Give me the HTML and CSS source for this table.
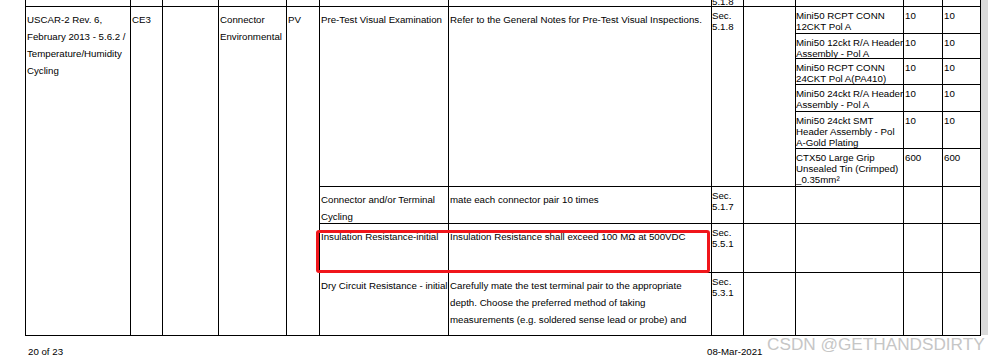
FILE: index.html
```html
<!DOCTYPE html>
<html>
<head>
<meta charset="utf-8">
<link rel="stylesheet" href="styles.css">
</head>
<body>
<div class="page">
  <div class="sheet">
    <div class="grid">
      <!-- tail of the previous row -->
      <div class="cell"></div><div class="cell"></div><div class="cell"></div><div class="cell"></div>
      <div class="cell"></div><div class="cell"></div><div class="cell"></div>
      <div class="cell sec"><div class="cut"><span>5.1.8</span></div></div>
      <div class="cell"></div><div class="cell"></div><div class="cell"></div><div class="cell"></div>

      <!-- main row -->
      <div class="cell txt span9">USCAR-2 Rev. 6,<br>February 2013 - 5.6.2 /<br>Temperature/Humidity<br>Cycling</div>
      <div class="cell txt span9">CE3</div>
      <div class="cell span9"></div>
      <div class="cell txt span9">Connector<br>Environmental</div>
      <div class="cell txt span9">PV</div>
      <div class="cell txt span6">Pre-Test Visual Examination</div>
      <div class="cell txt span6">Refer to the General Notes for Pre-Test Visual Inspections.</div>
      <div class="cell sec span6">Sec.<br>5.1.8</div>
      <div class="cell span6"></div>

      <div class="cell sub">Mini50 RCPT CONN<br>12CKT Pol A</div><div class="cell sub num">10</div><div class="cell sub num">10</div>
      <div class="cell sub">Mini50 12ckt R/A Header<br>Assembly - Pol A</div><div class="cell sub num">10</div><div class="cell sub num">10</div>
      <div class="cell sub">Mini50 RCPT CONN<br>24CKT Pol A(PA410)</div><div class="cell sub num">10</div><div class="cell sub num">10</div>
      <div class="cell sub">Mini50 24ckt R/A Header<br>Assembly - Pol A</div><div class="cell sub num">10</div><div class="cell sub num">10</div>
      <div class="cell sub">Mini50 24ckt SMT<br>Header Assembly - Pol<br>A-Gold Plating</div><div class="cell sub num">10</div><div class="cell sub num">10</div>
      <div class="cell sub">CTX50 Large Grip<br>Unsealed Tin (Crimped)<br>_0.35mm²</div><div class="cell sub num">600</div><div class="cell sub num">600</div>

      <!-- connector cycling -->
      <div class="cell txt">Connector and/or Terminal<br>Cycling</div>
      <div class="cell txt">mate each connector pair 10 times</div>
      <div class="cell sec">Sec.<br>5.1.7</div>
      <div class="cell"></div><div class="cell"></div><div class="cell"></div><div class="cell"></div>

      <!-- insulation -->
      <div class="cell txt">Insulation Resistance-initial</div>
      <div class="cell txt">Insulation Resistance shall exceed 100 MΩ at 500VDC</div>
      <div class="cell sec">Sec.<br>5.5.1</div>
      <div class="cell"></div><div class="cell"></div><div class="cell"></div><div class="cell"></div>

      <!-- dry circuit -->
      <div class="cell txt">Dry Circuit Resistance - initial</div>
      <div class="cell txt">Carefully mate the test terminal pair to the appropriate<br>depth. Choose the preferred method of taking<br>measurements (e.g. soldered sense lead or probe) and</div>
      <div class="cell sec">Sec.<br>5.3.1</div>
      <div class="cell"></div><div class="cell"></div><div class="cell"></div><div class="cell"></div>
    </div>
    <div class="highlight"></div>
    <div class="footer">
      <span class="pageno">20 of 23</span>
      <span class="date">08-Mar-2021</span>
      <span class="watermark">CSDN @GETHANDSDIRTY</span>
    </div>
  </div>
  <div class="edge"></div>
</div>
</body>
</html>
```
FILE: styles.css
```css
html, body {
  margin: 0;
  padding: 0;
  background: #fff;
}
body {
  width: 988px;
  height: 362px;
  overflow: hidden;
  font-family: "Liberation Sans", Arial, sans-serif;
  font-size: 9.7px;
  color: #000;
}
.page {
  display: flex;
  align-items: flex-start;
}
.sheet {
  position: relative;
  width: 981px;
  flex: none;
}
.edge {
  width: 7px;
  height: 335px;
  background: #dadada;
  flex: none;
}
.grid {
  margin-left: 25px;
  width: 956px;
  box-sizing: border-box;
  display: grid;
  grid-template-columns: 104px 31px 55px 67px 32px 128px 262px 31px 51px 107px 38px 37px;
  grid-template-rows: 6px 26px 24px 25px 26px 36px 37px 36px 48px 62px;
  gap: 1px;
  padding: 0 1px 1px 1px;
  background: #000;
}
.cell {
  background: #fff;
  white-space: nowrap;
  min-width: 0;
}
.span9 { grid-row: span 9; }
.span6 { grid-row: span 6; }
.txt {
  padding: 4px 0 0 1px;
  line-height: 17px;
}
.sec {
  padding: 3px 0 0 0;
  line-height: 11px;
}
.sub {
  padding: 3px 0 0 0;
  line-height: 11px;
}
.num {
  padding-left: 1px;
}
.cut {
  height: 6px;
  overflow: hidden;
  display: flex;
  align-items: flex-end;
  margin-top: -3px;
}
.cut span {
  display: block;
  line-height: 11px;
  margin-bottom: -1px;
}
.highlight {
  position: absolute;
  left: 316px;
  top: 230px;
  width: 388px;
  height: 37px;
  border: 3px solid #f0161b;
  border-radius: 3px;
}
.footer {
  position: relative;
  display: flex;
  padding: 10px 0 0 28px;
  line-height: 12px;
  height: 16px;
}
.pageno {
  width: 679px;
}
.watermark {
  position: absolute;
  left: 767px;
  top: -2px;
  font-size: 17.2px;
  line-height: 20px;
  color: #c6c6c6;
  white-space: nowrap;
}
```
